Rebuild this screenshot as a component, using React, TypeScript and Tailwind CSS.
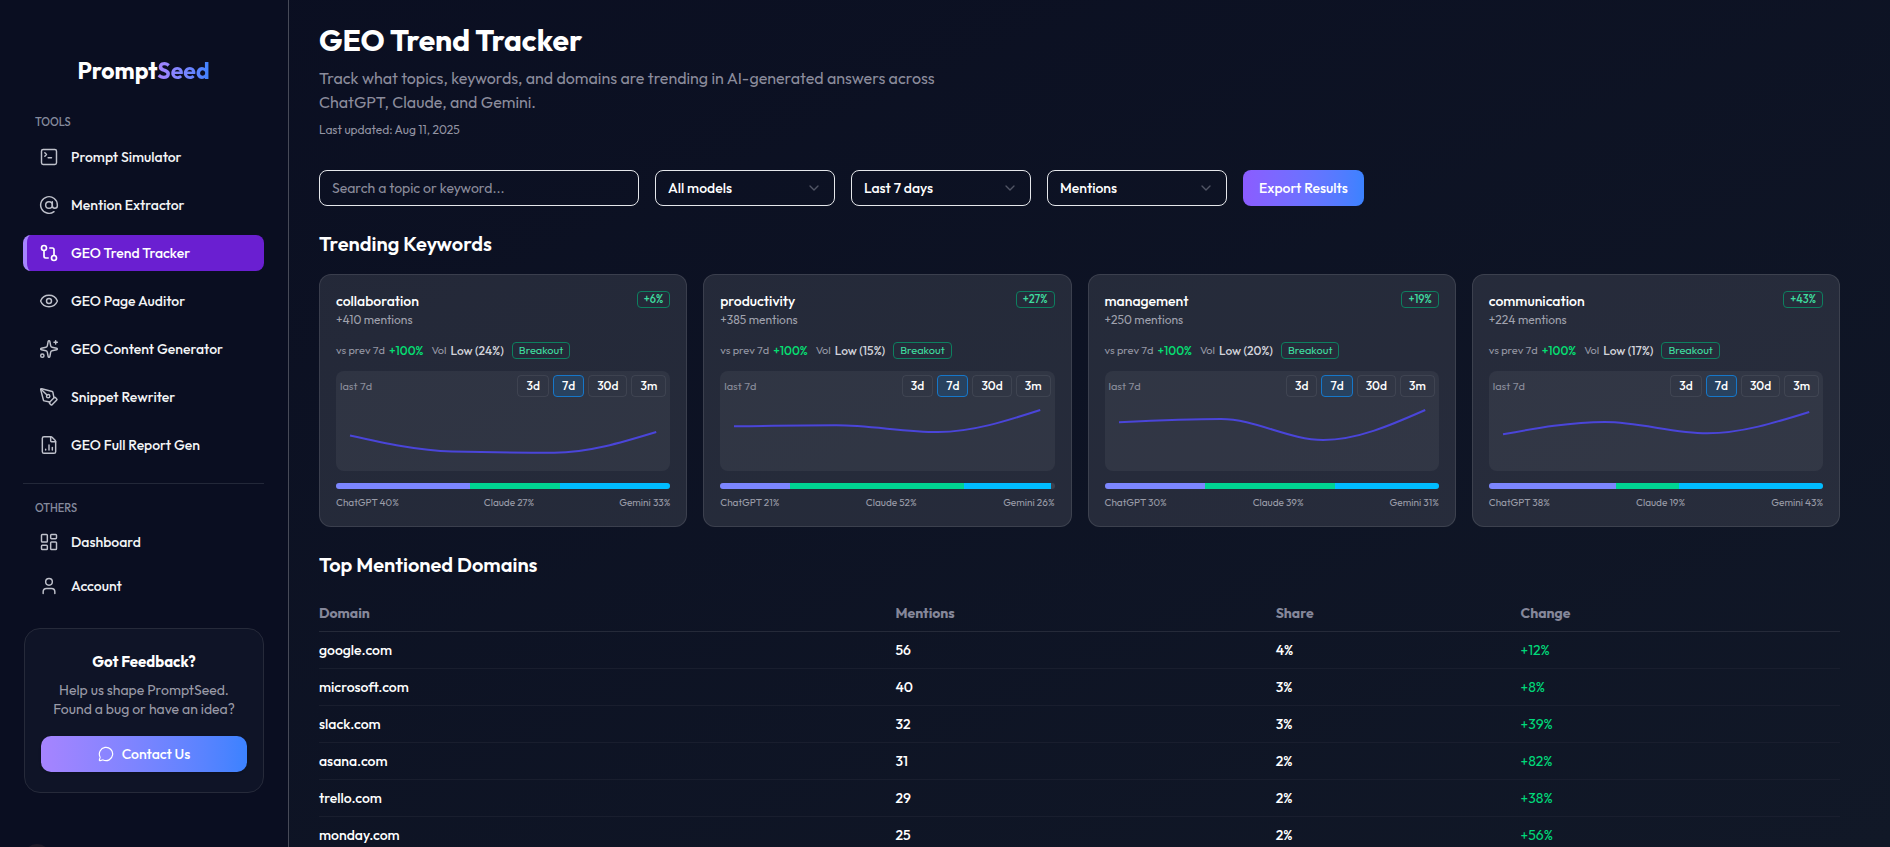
import React from "react";
import {
  AtSign,
  ChevronDown,
  Eye,
  FileChartColumn,
  GitCompare,
  LayoutDashboard,
  MessageCircle,
  PenTool,
  Sparkles,
  SquareTerminal,
  User,
  type LucideIcon,
} from "lucide-react";

type NavEntry = { label: string; icon: LucideIcon; active?: boolean };

const tools: NavEntry[] = [
  { label: "Prompt Simulator", icon: SquareTerminal },
  { label: "Mention Extractor", icon: AtSign },
  { label: "GEO Trend Tracker", icon: GitCompare, active: true },
  { label: "GEO Page Auditor", icon: Eye },
  { label: "GEO Content Generator", icon: Sparkles },
  { label: "Snippet Rewriter", icon: PenTool },
  { label: "GEO Full Report Gen", icon: FileChartColumn },
];

const others: NavEntry[] = [
  { label: "Dashboard", icon: LayoutDashboard },
  { label: "Account", icon: User },
];

type Keyword = {
  name: string;
  mentions: number;
  change: number;
  volume: number;
  points: number[];
  split: [number, number, number];
};

const keywords: Keyword[] = [
  { name: "collaboration", mentions: 410, change: 6, volume: 24, points: [64.5, 80.5, 81.7, 61], split: [40, 27, 33] },
  { name: "productivity", mentions: 385, change: 27, volume: 15, points: [55.3, 54.3, 61, 39], split: [21, 52, 26] },
  { name: "management", mentions: 250, change: 19, volume: 20, points: [51.3, 48, 69, 39], split: [30, 39, 31] },
  { name: "communication", mentions: 224, change: 43, volume: 17, points: [63.3, 51, 62.3, 41], split: [38, 19, 43] },
];

const domains = [
  ["google.com", "56", "4%", "+12%"],
  ["microsoft.com", "40", "3%", "+8%"],
  ["slack.com", "32", "3%", "+39%"],
  ["asana.com", "31", "2%", "+82%"],
  ["trello.com", "29", "2%", "+38%"],
  ["monday.com", "25", "2%", "+56%"],
];

const ranges = ["3d", "7d", "30d", "3m"];

/** Monotone cubic curve through evenly spaced samples. */
function curve(ys: number[], left: number, step: number) {
  const n = ys.length;
  const slope = ys.slice(1).map((y, i) => (y - ys[i]) / step);
  const tangent = ys.map((_, i) => {
    if (i === 0 || i === n - 1) return 0;
    const a = slope[i - 1];
    const b = slope[i];
    if (a * b <= 0) return 0;
    return Math.sign(a) * Math.min(Math.abs(a), Math.abs(b), Math.abs(a + b) / 4) * 2;
  });
  tangent[0] = (3 * slope[0] - tangent[1]) / 2;
  tangent[n - 1] = (3 * slope[n - 2] - tangent[n - 2]) / 2;
  let d = `M${left} ${ys[0]}`;
  for (let i = 1; i < n; i++) {
    const x0 = left + (i - 1) * step;
    const x1 = left + i * step;
    const third = step / 3;
    d += `C${x0 + third} ${ys[i - 1] + tangent[i - 1] * third} ${x1 - third} ${ys[i] - tangent[i] * third} ${x1} ${ys[i]}`;
  }
  return d;
}

function NavLink({ label, icon: Icon, active }: NavEntry) {
  return (
    <a
      href="#"
      aria-current={active ? "page" : undefined}
      className={
        active
          ? "flex h-9 items-center gap-3 rounded-lg border-l-4 border-[#a684ff] bg-[#6a1fd1] px-3 text-sm font-medium text-white"
          : "flex h-9 items-center gap-3 rounded-lg border-l-4 border-transparent px-3 text-sm font-medium text-gray-100"
      }
    >
      <Icon size={20} strokeWidth={active ? 2 : 1.75} className={active ? "text-white" : "text-[#bfc1cb]"} />
      {label}
    </a>
  );
}

function Sidebar() {
  return (
    <aside className="flex w-[289px] shrink-0 flex-col border-r border-[#474a58] bg-[#0a0e21] pr-6 pl-[23px]">
      <a href="#" className="mt-[53px] text-center text-[23px] leading-9 font-bold text-white">
        Prompt
        <span className="bg-linear-to-r from-[#a684ff] to-[#3b82ff] bg-clip-text text-transparent">Seed</span>
      </a>
      <nav aria-label="Tools" className="mt-6">
        <h2 className="px-3 text-[11px] leading-[18px] font-medium text-[#858a9d]">TOOLS</h2>
        <div className="mt-2 flex flex-col gap-3">
          {tools.map((t) => (
            <NavLink key={t.label} {...t} />
          ))}
        </div>
      </nav>
      <nav aria-label="Others" className="mt-5 border-t border-[#232839] pt-[15px]">
        <h2 className="px-3 text-[11px] leading-[18px] font-medium text-[#858a9d]">OTHERS</h2>
        <div className="mt-[7px] flex flex-col gap-2">
          {others.map((t) => (
            <NavLink key={t.label} {...t} />
          ))}
        </div>
      </nav>
      <section className="mt-6 ml-px rounded-2xl border border-[#262a3a] bg-[#0f1427] px-4 py-5 text-center">
        <h2 className="text-[15px] leading-[26px] font-bold text-white">Got Feedback?</h2>
        <p className="mt-1.5 text-sm leading-[19px] text-[#9a9ba8]">
          Help us shape PromptSeed.
          <br />
          Found a bug or have an idea?
        </p>
        <button className="mt-[17px] flex h-9 w-full items-center justify-center gap-2 rounded-[10px] bg-linear-to-r from-[#a684ff] to-[#3b82ff] text-sm font-medium text-white shadow-sm">
          <MessageCircle size={16} strokeWidth={1.75} />
          Contact Us
        </button>
      </section>
      <div className="mt-[51px] size-7 shrink-0 rounded-full bg-[#1d1a28]" />
    </aside>
  );
}

function FilterSelect({ label, options }: { label: string; options: string[] }) {
  return (
    <div className="relative w-[180px]">
      <select
        aria-label={label}
        className="h-9 w-full appearance-none rounded-lg border border-gray-200 bg-transparent px-3 text-sm font-medium text-white"
      >
        {options.map((o) => (
          <option key={o} className="bg-[#0c1124]">
            {o}
          </option>
        ))}
      </select>
      <ChevronDown size={16} className="pointer-events-none absolute top-2.5 right-[13px] text-[#515565]" />
    </div>
  );
}

function KeywordCard({ name, mentions, change, volume, points, split }: Keyword) {
  const parts = [
    { label: "ChatGPT", value: split[0], color: "bg-[#7c86ff]" },
    { label: "Claude", value: split[1], color: "bg-[#00d492]" },
    { label: "Gemini", value: split[2], color: "bg-[#00bcff]" },
  ];
  return (
    <article className="rounded-xl border border-white/10 bg-white/10 p-4">
      <div className="flex items-start justify-between">
        <div>
          <h3 className="text-sm leading-5 font-medium text-white">{name}</h3>
          <p className="text-xs leading-[17px] text-[#a0a2ae]">+{mentions} mentions</p>
        </div>
        <span className="rounded-sm border border-[#0d7f5f] px-1.5 text-[11px] leading-[15px] font-medium text-[#3fdc9f]">
          +{change}%
        </span>
      </div>
      <div className="mt-3.5 flex items-center gap-2 text-xs leading-[17px]">
        <span className="flex items-center gap-1 text-[11px] text-[#9496a3]">
          vs prev 7d <strong className="text-xs leading-[17px] font-medium text-[#05df72]">+100%</strong>
        </span>
        <span className="flex items-center gap-1 text-[11px] text-[#9496a3]">
          Vol <strong className="text-xs leading-[17px] font-medium text-[#d2d3da]">Low ({volume}%)</strong>
        </span>
        <span className="rounded-sm border border-[#0d7f5f] px-1.5 text-[11px] leading-[15px] text-[#3fdc9f]">
          Breakout
        </span>
      </div>
      <div className="relative mt-3 h-[100px] rounded-lg bg-white/5">
        <svg className="h-full w-full" viewBox="0 0 334 100" preserveAspectRatio="none" role="img" aria-label={`${name} trend`}>
          <path
            d={curve(points, 14, 102)}
            fill="none"
            stroke="#4a45d9"
            strokeWidth={2}
            vectorEffect="non-scaling-stroke"
          />
        </svg>
        <div className="absolute inset-x-1 top-1 flex items-center gap-1">
          <span className="mr-auto text-[11px] text-[#8a8d9b]">last 7d</span>
          {ranges.map((r) => (
            <button
              key={r}
              className={
                r === "7d"
                  ? "h-[22px] rounded-sm border border-[#1677c9] bg-[#28425f] px-2 text-xs font-medium text-white"
                  : "h-[22px] rounded-sm border border-white/7 px-2 text-xs font-medium text-white"
              }
            >
              {r}
            </button>
          ))}
        </div>
      </div>
      <div className="mt-3 flex h-1.5 overflow-hidden rounded-full bg-white/10">
        {parts.map((p) => (
          <div key={p.label} className={p.color} style={{ width: `${p.value}%` }} />
        ))}
      </div>
      <div className="mt-1.5 flex justify-between text-[10px] leading-[15px] text-[#9a9ca8]">
        {parts.map((p) => (
          <span key={p.label}>
            {p.label} {p.value}%
          </span>
        ))}
      </div>
    </article>
  );
}

export default function App() {
  return (
    <div className="flex h-screen overflow-hidden bg-linear-to-br from-[#0a0e21] to-[#111827] font-['Outfit','Lato',sans-serif]">
      <Sidebar />
      <main className="min-w-0 flex-1 pt-[22px] pr-[50px] pl-[30px]">
        <h1 className="text-[30px] leading-9 font-bold text-white">GEO Trend Tracker</h1>
        <p className="mt-2 max-w-[640px] text-base leading-6 text-[#8b8c9c]">
          Track what topics, keywords, and domains are trending in AI-generated answers across ChatGPT, Claude, and
          Gemini.
        </p>
        <p className="mt-2 text-xs text-[#9394a3]">Last updated: Aug 11, 2025</p>

        <form className="mt-8 flex flex-wrap gap-4" onSubmit={(e) => e.preventDefault()}>
          <input
            type="search"
            aria-label="Search a topic or keyword"
            placeholder="Search a topic or keyword..."
            className="h-9 w-80 rounded-lg border border-gray-200 bg-transparent px-3 text-sm text-white placeholder:text-[#8b8c9c]"
          />
          <FilterSelect label="Model" options={["All models", "ChatGPT", "Claude", "Gemini"]} />
          <FilterSelect label="Period" options={["Last 7 days", "Last 30 days"]} />
          <FilterSelect label="Sort by" options={["Mentions", "Change"]} />
          <button className="h-9 rounded-lg bg-linear-to-r from-[#8b5cff] to-[#3b82ff] px-4 text-sm font-medium text-white">
            Export Results
          </button>
        </form>

        <h2 className="mt-6 text-xl leading-7 font-semibold text-white">Trending Keywords</h2>
        <div className="mt-4 grid grid-cols-4 gap-4">
          {keywords.map((k) => (
            <KeywordCard key={k.name} {...k} />
          ))}
        </div>

        <h2 className="mt-6 text-xl leading-7 font-semibold text-white">Top Mentioned Domains</h2>
        <table className="mt-4 w-full table-fixed text-left text-sm">
          <thead>
            <tr className="border-b border-[#252a39] text-[#85879a]">
              <th className="w-[37.9%] py-2 font-bold">Domain</th>
              <th className="w-[25%] py-2 font-bold">Mentions</th>
              <th className="w-[16.1%] py-2 font-bold">Share</th>
              <th className="py-2 font-bold">Change</th>
            </tr>
          </thead>
          <tbody>
            {domains.map(([domain, count, share, change]) => (
              <tr key={domain} className="border-b border-[#191e2e] font-medium text-white">
                <td className="py-2">{domain}</td>
                <td className="py-2">{count}</td>
                <td className="py-2">{share}</td>
                <td className="py-2 font-normal text-[#00d97a]">{change}</td>
              </tr>
            ))}
          </tbody>
        </table>
      </main>
    </div>
  );
}
